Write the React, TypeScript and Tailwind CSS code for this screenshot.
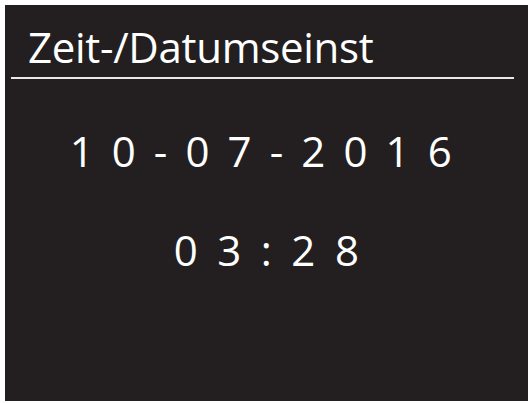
export default function App() {
  return (
    <div className="w-[531px] h-[403px] bg-white pt-[5px] pl-[5px] pr-[3px] pb-[2px]" style={{ fontFamily: '"Open Sans", "Noto Sans", sans-serif' }}>
      <div className="w-full h-full bg-[#231f20] text-white flex flex-col">
        {/* Header */}
        <div className="pl-[23px] pt-[16px] h-[72px] text-[42px] leading-[52px] tracking-[-0.3px]">Zeit-/Datumseinst</div>
        <div className="mx-[6px] mr-[14px] h-[2px] bg-[#e8e8e8]" />

        {/* Date / Time */}
        <div className="flex flex-col items-center pt-[48px] text-[42px] leading-[48px]">
          <div className="pr-[8px] tracking-[3.6px]">1 0 - 0 7 - 2 0 1 6</div>
          <div className="mt-[51px] pl-[4px] tracking-[4.3px]">0 3 : 2 8</div>
        </div>
      </div>
    </div>
  );
}
